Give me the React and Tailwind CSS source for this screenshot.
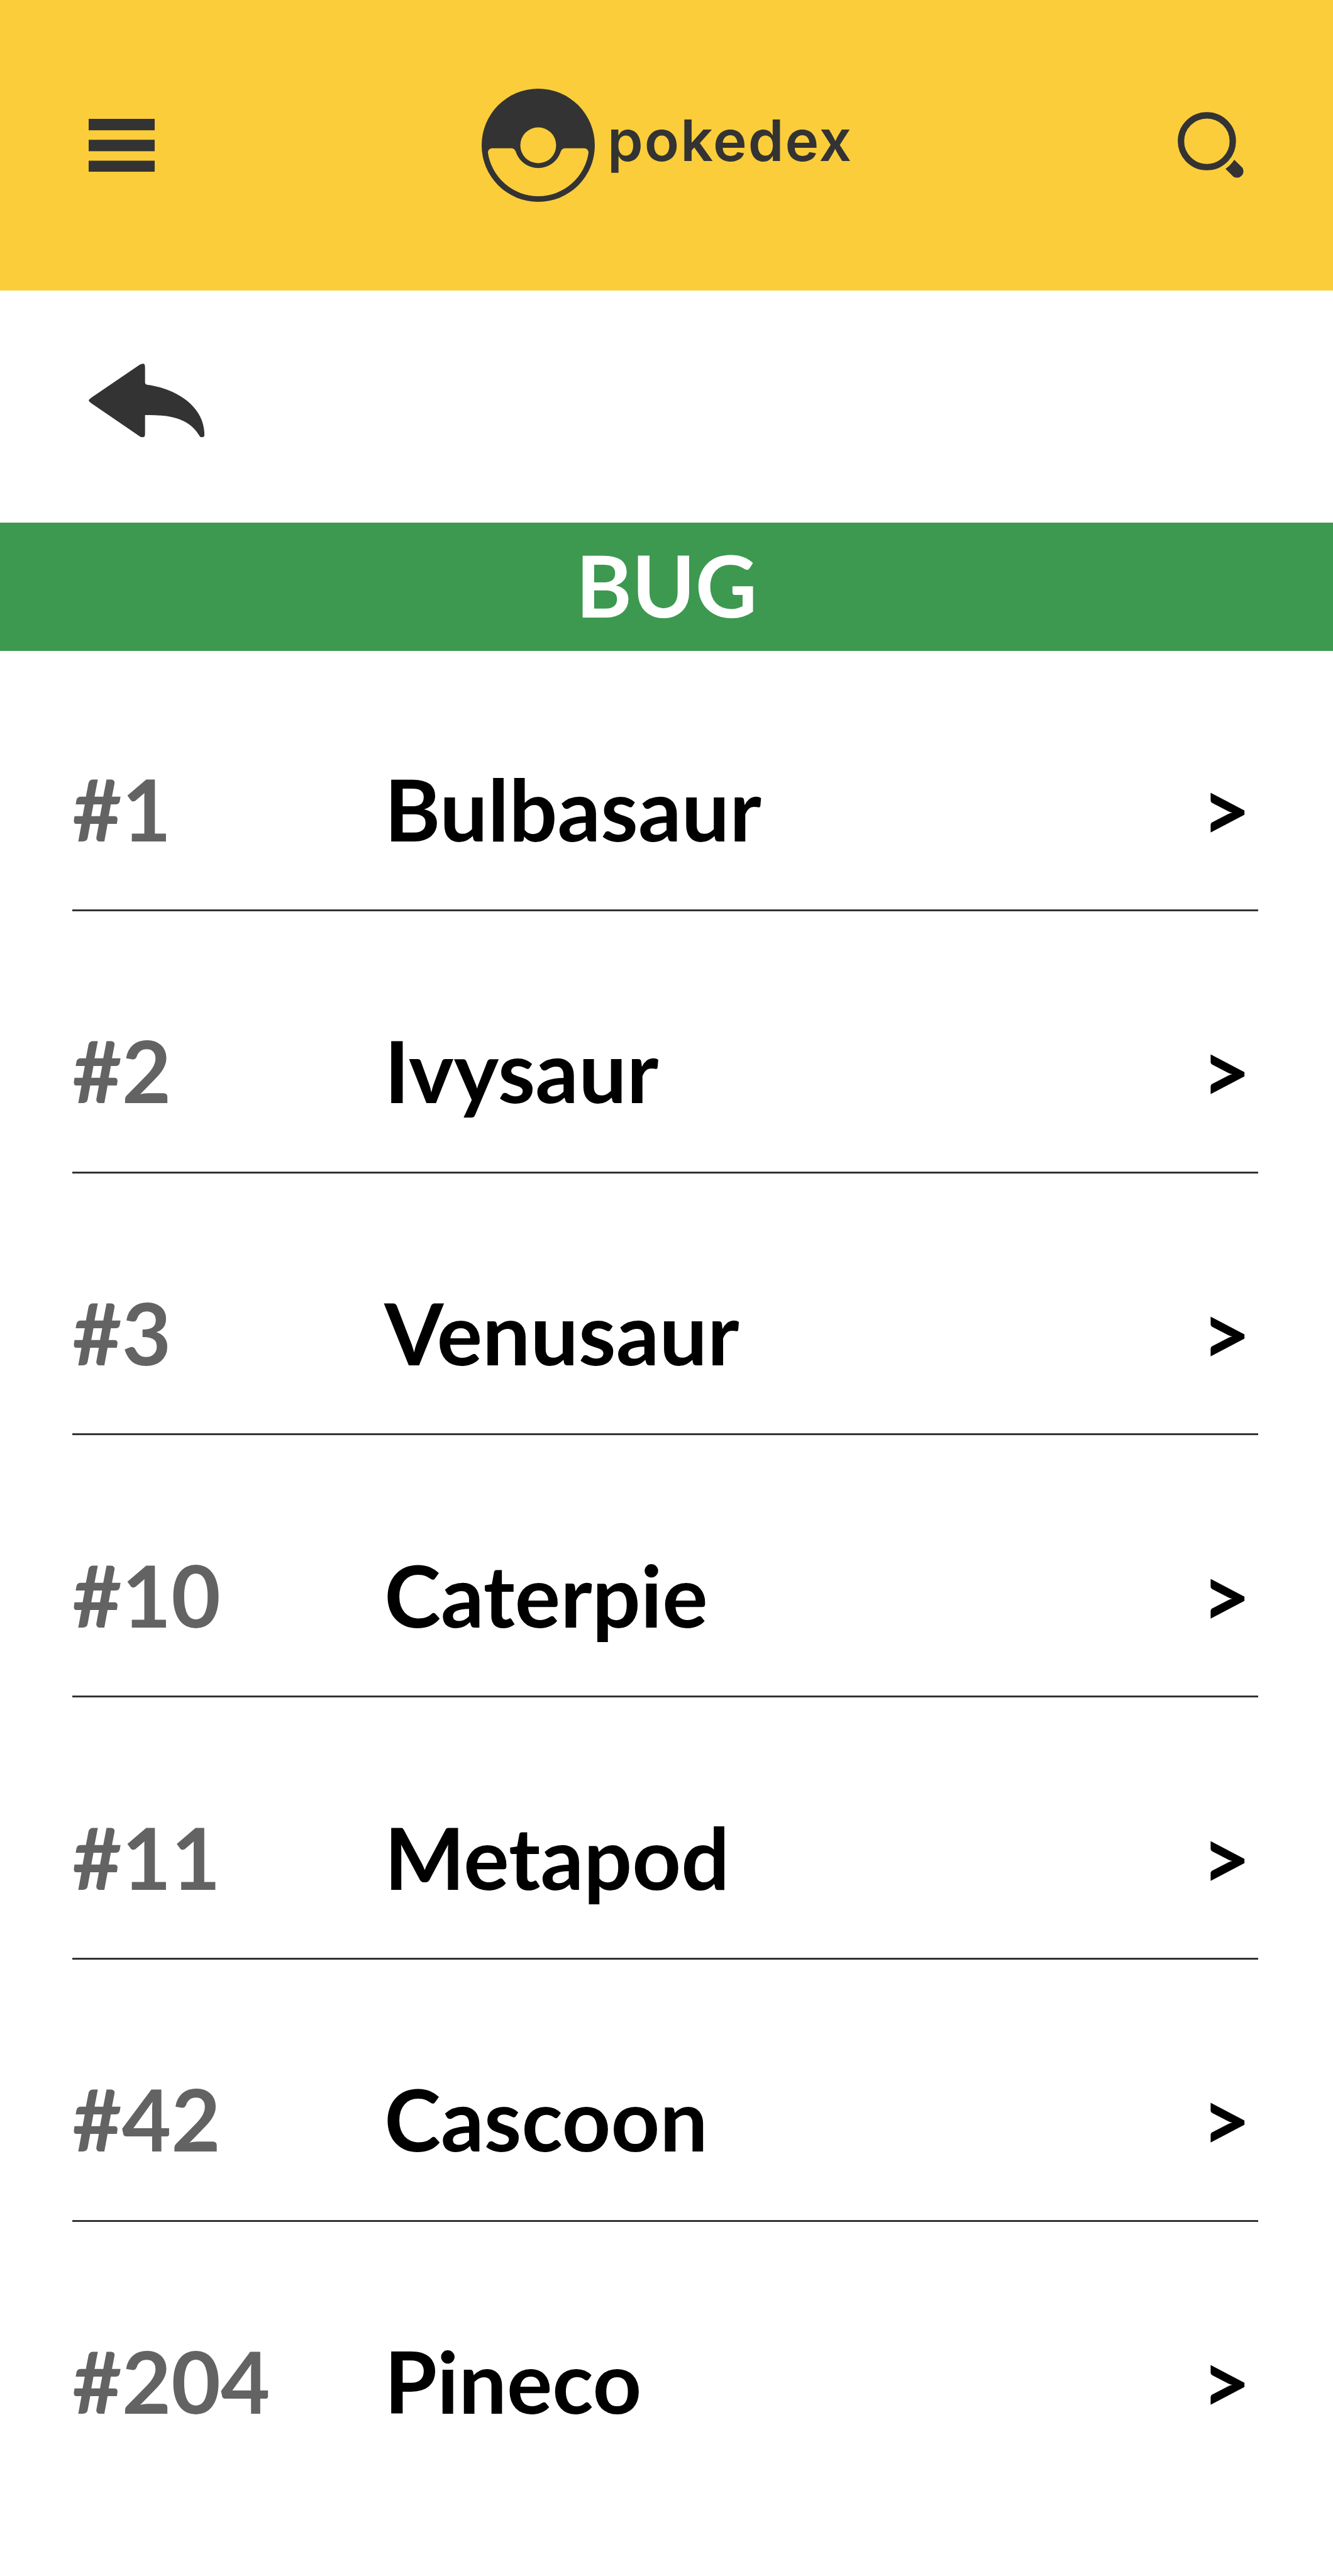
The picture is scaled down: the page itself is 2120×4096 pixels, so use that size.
const pokemon = [
  { id: 1, name: "Bulbasaur" },
  { id: 2, name: "Ivysaur" },
  { id: 3, name: "Venusaur" },
  { id: 10, name: "Caterpie" },
  { id: 11, name: "Metapod" },
  { id: 42, name: "Cascoon" },
  { id: 204, name: "Pineco" },
];

function MenuIcon() {
  return (
    <svg viewBox="0 0 155 125" className="h-[84.7px] w-[105px] shrink-0" fill="#333333">
      <rect x="0" y="0" width="155" height="26.8" />
      <rect x="0" y="49.1" width="155" height="26.8" />
      <rect x="0" y="98.2" width="155" height="26.8" />
    </svg>
  );
}

function Pokeball() {
  return (
    <svg viewBox="10.9 7.5 265.6 265.6" className="size-[180px] shrink-0">
      <circle cx="143.7" cy="140.3" r="132.8" fill="#333333" />
      <circle cx="143.7" cy="140.3" r="42" fill="#fbcd3b" />
      <path
        d="M36 147.2H80.5C86 147.2 89.4 150.5 91.3 156.3A55.4 55.4 0 0 0 196.1 156.3C198 150.5 201.4 147.2 207 147.2H251.3C257.5 147.2 261.8 151.5 261.7 158A119.3 119.3 0 0 1 25.7 158C25.6 151.5 30 147.2 36 147.2Z"
        fill="#fbcd3b"
      />
    </svg>
  );
}

function SearchIcon() {
  return (
    <svg viewBox="0 0 157 157" className="size-[106.4px] shrink-0">
      <circle cx="68.5" cy="68.7" r="60.8" fill="none" stroke="#333333" strokeWidth="15" />
      <path
        d="M132.8 112.2L152 131.1A15.2 15.2 0 0 1 131.3 152.2L112.2 133.4A77.7 77.7 0 0 0 132.8 112.2Z"
        fill="#333333"
      />
    </svg>
  );
}

function BackIcon() {
  return (
    <svg viewBox="177 156 815.5 521.5" className="h-[117.8px] w-[184.2px]" fill="#333333">
      <path d="M177 416Q180 408 196 396L536 165Q550 157 563 157Q574 159 574 185V290Q575 303 588 305C800 333 992 462 992 655Q993 664 990 668Q982 676 971 677Q963 676 957 664C890 555 780 519 610 519H574V655Q573 676 559 677Q550 678 536 668L196 436Q180 424 177 416Z" />
    </svg>
  );
}

export default function App() {
  return (
    <div className="flex h-[4096px] w-[2120px] flex-col overflow-hidden bg-white font-['Lato',sans-serif] text-[135.6px] font-bold">
      <header className="flex h-[461.7px] shrink-0 items-center justify-between bg-[#fbcd3b] px-[141.1px]">
        <MenuIcon />
        <div className="flex w-[586px] items-center gap-[19.7px]">
          <Pokeball />
          <span className="pb-[16px] font-['Inter',sans-serif] text-[91px] leading-[110px] font-semibold tracking-[2px] text-[#333333]">
            pokedex
          </span>
        </div>
        <SearchIcon />
      </header>
      <nav className="h-[369.2px] shrink-0 px-[141.1px] pt-[115.9px]">
        <BackIcon />
      </nav>
      <h1 className="h-[203.7px] shrink-0 bg-[#3d9950] text-center leading-[197px] text-white">BUG</h1>
      <ul className="flex flex-col gap-[173.43px] pr-[118.9px] pl-[115px] pt-[171.2px]">
        {pokemon.map((p) => (
          <li
            key={p.id}
            className="flex border-b-[3px] border-[#333333] pr-[11.8px] pb-[80.3px] leading-[160px] text-black last:border-b-0"
          >
            <span className="w-[496.3px] text-[#636363]">#{p.id}</span>
            <span className="grow">{p.name}</span>
            <span>&gt;</span>
          </li>
        ))}
      </ul>
    </div>
  );
}
